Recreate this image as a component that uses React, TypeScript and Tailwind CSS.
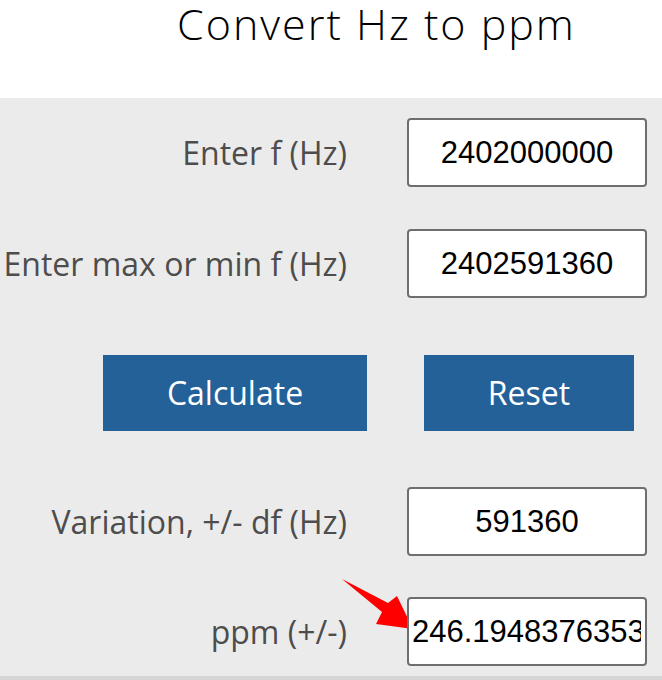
import React from "react";

const labelCls =
  "text-right text-[32px] leading-none text-[#4d4d4d] font-['Open_Sans',sans-serif] w-[347px] shrink-0 whitespace-nowrap";
const inputCls =
  "relative w-[240px] h-[69px] shrink-0 bg-white border-2 border-[#6e6e6e] rounded-[4px] text-[31px] text-black font-['Liberation_Sans',Arial,sans-serif] outline-none";

function Row({ label, value, mt, left }: { label: string; value: string; mt: string; left?: boolean }) {
  return (
    <div className={`flex items-center ${mt}`}>
      <div className={labelCls}>{label}</div>
      <div className="w-[60px] shrink-0" />
      <input
        readOnly
        value={value}
        className={`${inputCls} ${left ? "text-left pl-[3px] pr-[4px]" : "text-center"}`}
      />
    </div>
  );
}

export default function App() {
  return (
    <div className="w-[662px] h-[680px] bg-white overflow-hidden">
      <div className="flex items-start h-[98px] pl-[177px] pt-[1px]">
        <h1 className="text-[43px] leading-[46px] font-light text-black font-['Open_Sans',sans-serif] tracking-[2px] whitespace-nowrap">
          Convert Hz to ppm
        </h1>
      </div>
      <div className="relative h-[582px] bg-[#ebebeb] border-b-4 border-[#d5d5d5] pt-[20px]">
        <svg
          className="absolute left-0 top-0 pointer-events-none"
          width="662"
          height="578"
          viewBox="0 0 662 578"
        >
          <polygon
            points="342,481 388,505 397,498 413,531 376,526 382,514"
            fill="#ff0000"
          />
        </svg>
        <Row label="Enter f (Hz)" value="2402000000" mt="mt-0" />
        <Row label="Enter max or min f (Hz)" value="2402591360" mt="mt-[42px]" />
        <div className="flex mt-[57px] pl-[103px]">
          <button className="w-[264px] h-[76px] bg-[#246199] text-white text-[32px] font-['Open_Sans',sans-serif]">
            Calculate
          </button>
          <button className="ml-[57px] w-[210px] h-[76px] bg-[#246199] text-white text-[32px] font-['Open_Sans',sans-serif]">
            Reset
          </button>
        </div>
        <Row label="Variation, +/- df (Hz)" value="591360" mt="mt-[56px]" />
        <Row label="ppm (+/-)" value="246.19483763530" mt="mt-[41px]" left />
      </div>
    </div>
  );
}
